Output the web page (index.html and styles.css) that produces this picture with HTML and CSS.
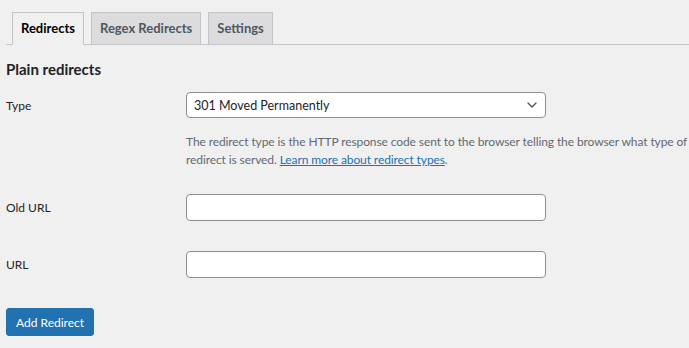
FILE: index.html
```html
<!DOCTYPE html>
<html lang="en">
<head>
  <meta charset="UTF-8">
  <meta name="viewport" content="width=device-width, initial-scale=1.0">
  <title>Redirects</title>
  <link rel="stylesheet" href="styles.css">
</head>
<body>
  <div class="wrap">
    <nav class="nav-tabs">
      <a href="#" class="nav-tab active">Redirects</a>
      <a href="#" class="nav-tab">Regex Redirects</a>
      <a href="#" class="nav-tab">Settings</a>
    </nav>

    <h2 class="section-title">Plain redirects</h2>

    <form class="redirect-form" onsubmit="return false;">
      <div class="form-row row-type">
        <label class="row-label" for="redirectType">Type</label>
        <div class="row-field">
          <div class="select-wrap">
            <select id="redirectType" class="field">
              <option>301 Moved Permanently</option>
              <option>302 Found</option>
              <option>307 Temporary Redirect</option>
              <option>410 Content Deleted</option>
              <option>451 Unavailable For Legal Reasons</option>
            </select>
            <svg class="select-arrow" viewBox="0 0 10 6" fill="none" stroke="currentColor">
              <path d="M1 1l4 4 4-4" stroke-width="1.4" stroke-linecap="round" stroke-linejoin="round"></path>
            </svg>
          </div>
          <p class="description">
            The redirect type is the HTTP response code sent to the browser telling the browser what type of
            redirect is served. <a href="#">Learn more about redirect types</a>.
          </p>
        </div>
      </div>

      <div class="form-row">
        <label class="row-label" for="oldUrl">Old URL</label>
        <div class="row-field">
          <input type="text" id="oldUrl" class="field">
        </div>
      </div>

      <div class="form-row">
        <label class="row-label" for="newUrl">URL</label>
        <div class="row-field">
          <input type="text" id="newUrl" class="field">
        </div>
      </div>

      <button type="submit" class="button-primary">Add Redirect</button>
    </form>
  </div>
</body>
</html>
```

FILE: styles.css
```css
* {
  margin: 0;
  padding: 0;
  box-sizing: border-box;
}

:root {
  --bg: #f0f0f1;
  --tab-bg: #dcdcde;
  --border: #c3c4c7;
  --input-border: #8c8f94;
  --text: #1d2327;
  --text-muted: #50575e;
  --description: #646970;
  --accent: #2271b1;
}

body {
  font-family: Lato, "Liberation Sans", sans-serif;
  font-size: 12px;
  background-color: var(--bg);
  color: var(--text);
  overflow: hidden;
}

.wrap {
  padding: 12px 0 0 6px;
}

/* Tabs */
.nav-tabs {
  display: flex;
  gap: 7px;
  padding-left: 6px;
  border-bottom: 1px solid var(--border);
}

.nav-tab {
  display: block;
  height: 33px;
  padding: 0 8px;
  margin-bottom: -1px;
  line-height: 31px;
  font-size: 13px;
  font-weight: 700;
  color: var(--text-muted);
  text-decoration: none;
  background-color: var(--tab-bg);
  border: 1px solid var(--border);
}

.nav-tab.active {
  color: #000;
  background-color: var(--bg);
  border-bottom-color: var(--bg);
}

.section-title {
  margin-top: 13px;
  font-size: 15px;
  font-weight: 700;
  line-height: 22px;
}

/* Form rows */
.form-row {
  display: flex;
  align-items: flex-start;
}

.row-type {
  margin-top: 12px;
}

.form-row + .form-row {
  margin-top: 30px;
}

.row-type + .form-row {
  margin-top: 25px;
}

.row-label {
  width: 180px;
  flex-shrink: 0;
  line-height: 27px;
  color: var(--text);
}

.row-field {
  flex: 1;
}

.field {
  display: block;
  width: 360px;
  height: 27px;
  padding: 0 7px;
  font-family: inherit;
  font-size: 12.5px;
  color: var(--text);
  background-color: #fff;
  border: 1px solid var(--input-border);
  border-radius: 4px;
  outline: none;
}

.select-wrap {
  position: relative;
  width: 360px;
}

select.field {
  height: 26px;
  appearance: none;
  -webkit-appearance: none;
  padding-right: 24px;
}

.select-arrow {
  position: absolute;
  right: 9px;
  top: 10px;
  width: 10px;
  height: 6px;
  color: #50575e;
  pointer-events: none;
}

.description {
  max-width: 503px;
  margin-top: 15px;
  line-height: 18px;
  letter-spacing: -0.1px;
  color: var(--description);
}

.description a {
  color: var(--accent);
}

.button-primary {
  display: block;
  margin-top: 30px;
  height: 28px;
  padding: 0 9px;
  font-family: inherit;
  font-size: 12px;
  color: #fff;
  background-color: var(--accent);
  border: 1px solid var(--accent);
  border-radius: 3px;
  cursor: pointer;
}
```
